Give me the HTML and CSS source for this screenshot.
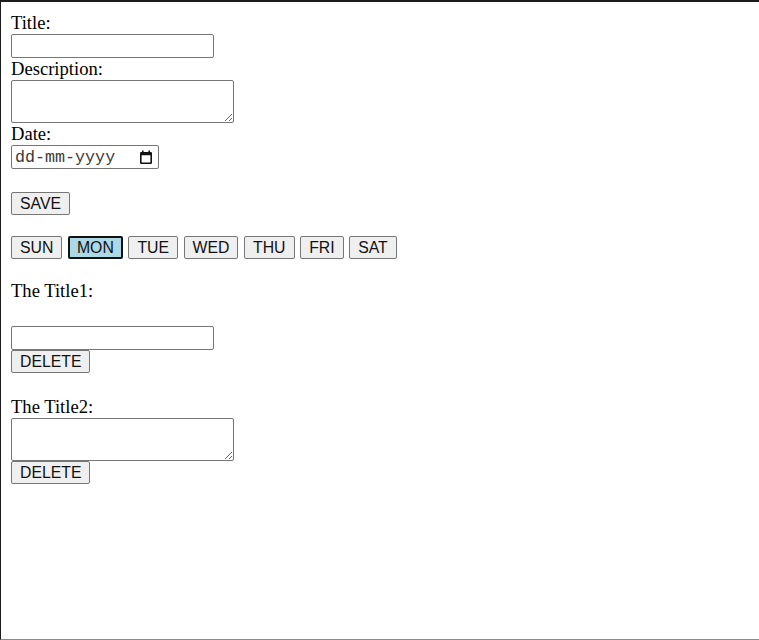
FILE: index.html
```html
<!DOCTYPE html>
<html lang="en">
<head>
<meta charset="utf-8">
<title>Planner</title>
<link rel="stylesheet" href="styles.css">
</head>
<body>
<div class="frame">
  <form class="entry-form">
    <label class="field-label" for="title">Title:</label>
    <input id="title" class="text-input" type="text">
    <label class="field-label" for="desc">Description:</label>
    <textarea id="desc" class="text-area"></textarea>
    <label class="field-label" for="date">Date:</label>
    <div class="date-field">
      <input id="date" class="date-text" type="text" placeholder="dd-mm-yyyy">
      <svg class="cal-icon" width="14" height="14" viewBox="0 0 14 14" aria-hidden="true">
        <path d="M3 0.5h1.6v1.5h4.8V0.5H11v1.5h0.8A1.2 1.2 0 0 1 13 3.2v9.6a1.2 1.2 0 0 1-1.2 1.2H2.2A1.2 1.2 0 0 1 1 12.8V3.2A1.2 1.2 0 0 1 2.2 2H3zM2.6 5.2v7.2h8.8V5.2z" fill="#111" fill-rule="evenodd"/>
      </svg>
    </div>
    <button type="button" class="btn save-btn">SAVE</button>
  </form>

  <div class="days">
    <button type="button" class="btn day">SUN</button>
    <button type="button" class="btn day day-active">MON</button>
    <button type="button" class="btn day">TUE</button>
    <button type="button" class="btn day">WED</button>
    <button type="button" class="btn day">THU</button>
    <button type="button" class="btn day">FRI</button>
    <button type="button" class="btn day">SAT</button>
  </div>

  <ul class="entries">
    <li class="entry">
      <span class="field-label">The Title1:</span>
      <input class="text-input entry-input" type="text">
      <button type="button" class="btn">DELETE</button>
    </li>
    <li class="entry entry-second">
      <span class="field-label">The Title2:</span>
      <textarea class="text-area"></textarea>
      <button type="button" class="btn">DELETE</button>
    </li>
  </ul>
</div>
</body>
</html>
```

FILE: styles.css
```css
html {
  background: #ffffff;
}

body {
  margin: 0;
  font-family: "Liberation Serif", "Times New Roman", serif;
  font-size: 18.6px;
  color: #000;
}

.frame {
  box-sizing: border-box;
  min-height: 640px;
  border-top: 2px solid #1c1c1c;
  border-left: 1px solid #1c1c1c;
  border-bottom: 1px solid #8a8a8a;
  padding: 10px 0 0 10px;
}

.entry-form {
  display: flex;
  flex-direction: column;
  align-items: flex-start;
  margin: 0;
}

.field-label {
  display: block;
  height: 22px;
  line-height: 22px;
}

.text-input {
  box-sizing: border-box;
  width: 203px;
  height: 24px;
  margin: 0;
  border: 1px solid #767676;
  border-radius: 2px;
  padding: 1px 3px;
  font-family: "Liberation Sans", Arial, sans-serif;
  font-size: 15.4px;
  background: #fff;
}

.text-area {
  box-sizing: border-box;
  width: 223px;
  height: 43px;
  margin: 0;
  border: 1px solid #767676;
  border-radius: 2px;
  padding: 2px;
  font-family: "Liberation Mono", monospace;
  font-size: 15px;
  background: #fff;
  display: block;
}

.date-field {
  box-sizing: border-box;
  display: flex;
  align-items: center;
  width: 148px;
  height: 24px;
  border: 1px solid #767676;
  border-radius: 2px;
  padding: 0 5px 0 3px;
  background: #fff;
}

.date-text {
  flex: 1;
  min-width: 0;
  border: 0;
  padding: 0;
  margin: 0;
  outline: none;
  font-family: "Liberation Mono", "Courier New", monospace;
  font-size: 16.7px;
  color: #333;
  background: transparent;
}

.date-text::placeholder {
  color: #3a3a3a;
  opacity: 1;
}

.cal-icon {
  flex: none;
  display: block;
}

.btn {
  box-sizing: border-box;
  height: 23px;
  margin: 0;
  padding: 0 8px;
  border: 1px solid #767676;
  border-radius: 2px;
  background: #efefef;
  color: #111;
  font-family: "Liberation Sans", Arial, sans-serif;
  font-size: 15.8px;
  line-height: 19px;
}

.save-btn {
  margin-top: 23px;
}

.days {
  display: flex;
  gap: 5.6px;
  margin-top: 21px;
}

.day-active {
  background: #add8e6;
  border: 2px solid #111;
  padding: 0 7px;
}

.entries {
  list-style: none;
  margin: 21px 0 0;
  padding: 0;
}

.entry {
  display: flex;
  flex-direction: column;
  align-items: flex-start;
}

.entry-input {
  margin-top: 24px;
}

.entry-second {
  margin-top: 23px;
}
```
